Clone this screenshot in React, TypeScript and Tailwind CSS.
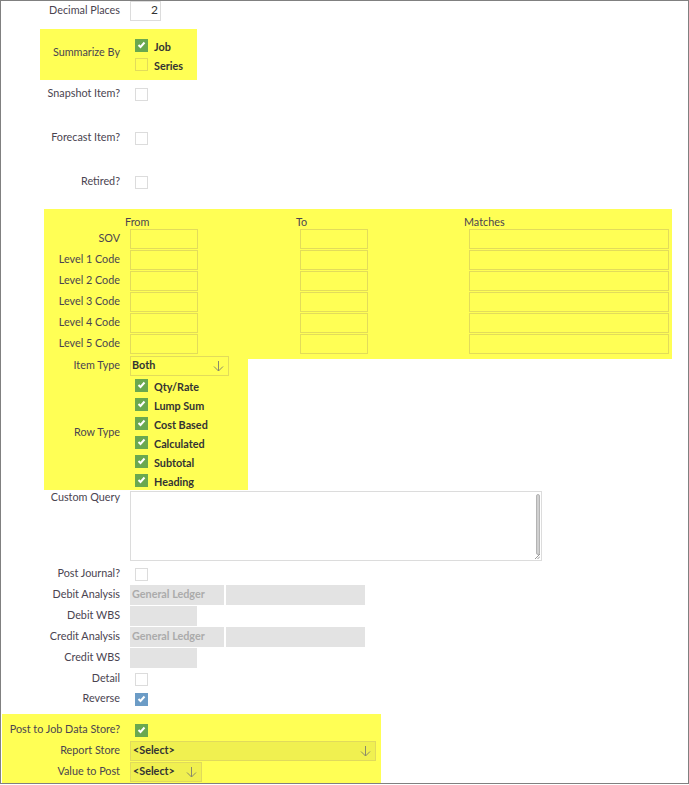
import React from 'react';

type Tone = 'green' | 'blue' | 'white' | 'yellow';

const Check = ({ tone }: { tone: Tone }) => {
  const base = 'w-[13px] h-[13px] shrink-0 flex items-center justify-center';
  const cls =
    tone === 'green'
      ? 'bg-[#6aa84f]'
      : tone === 'blue'
      ? 'bg-[#6c9cc6]'
      : tone === 'yellow'
      ? 'border border-[#e2dc5a]'
      : 'bg-white border border-[#dcdcdc]';
  const on = tone === 'green' || tone === 'blue';
  return (
    <div className={`${base} ${cls}`}>
      {on && (
        <svg width="13" height="13" viewBox="0 0 13 13">
          <polyline points="3.5,6 5.5,8 9.5,3.5" fill="none" stroke="#ffffff" strokeWidth="2" />
        </svg>
      )}
    </div>
  );
};

const Arrow = () => (
  <svg width="11" height="12" viewBox="0 0 11 12" className="shrink-0">
    <path d="M5.5 1 V11 M1 6.5 L5.5 11 L10 6.5" fill="none" stroke="#8a8a6a" strokeWidth="1" />
  </svg>
);

const Row = ({ label, w, children, className = '' }: { label: string; w: string; children?: React.ReactNode; className?: string }) => (
  <div className={`flex items-center h-[20px] ${className}`}>
    <div className={`${w} shrink-0 text-right text-[#4a4450] leading-[13px] pb-[3px]`}>{label}</div>
    <div className="ml-[10px] flex items-center h-full">{children}</div>
  </div>
);

const YInput = ({ w }: { w: string }) => <div className={`${w} h-[20px] border border-[#e2dc5a]`} />;

const Gray = ({ w, text }: { w: string; text?: string }) => (
  <div className={`${w} h-[20px] bg-[#e3e3e3] flex items-center pl-[2px] pb-[2px] font-bold text-[#ababab]`}>{text}</div>
);

const CheckItem = ({ label, tone }: { label: string; tone: Tone }) => (
  <div className="flex items-center h-[19px] pl-[5px]">
    <Check tone={tone} />
    <span className="ml-[6px] font-bold text-[#333333] leading-[13px] pt-[1px]">{label}</span>
  </div>
);

export default function App() {
  const codes = ['SOV', 'Level 1 Code', 'Level 2 Code', 'Level 3 Code', 'Level 4 Code', 'Level 5 Code'];
  const rowTypes = ['Qty/Rate', 'Lump Sum', 'Cost Based', 'Calculated', 'Subtotal', 'Heading'];
  return (
    <div className="w-[689px] h-[784px] border border-[#808080] bg-white overflow-hidden font-['Lato','Liberation_Sans',sans-serif] text-[10.8px]">
      {/* Decimal places */}
      <Row label="Decimal Places" w="w-[119px]">
        <div className="w-[31px] h-[20px] border border-[#dcdcdc] flex items-center justify-end pr-[2px] pb-[2px] text-[12px] text-[#333]">2</div>
      </Row>

      {/* Summarize by */}
      <div className="ml-[39px] mt-[8px] w-[157px] h-[51px] bg-[#ffff55] flex items-center">
        <div className="w-[80px] shrink-0 text-right text-[#4a4450] pb-[5px]">Summarize By</div>
        <div className="ml-[10px] self-start pt-[7px]">
          <CheckItem label="Job" tone="green" />
          <CheckItem label="Series" tone="yellow" />
        </div>
      </div>

      <Row label="Snapshot Item?" w="w-[119px]" className="mt-[4px]">
        <div className="pl-[5px]"><Check tone="white" /></div>
      </Row>
      <Row label="Forecast Item?" w="w-[119px]" className="mt-[24px]">
        <div className="pl-[5px]"><Check tone="white" /></div>
      </Row>
      <Row label="Retired?" w="w-[119px]" className="mt-[24px]">
        <div className="pl-[5px]"><Check tone="white" /></div>
      </Row>

      {/* Code ranges */}
      <div className="ml-[43px] mt-[17px] w-[628px] bg-[#ffff55] pb-[4px]">
        <div className="flex items-end h-[20px] text-[#4a4450] leading-[13px] pb-[1px]">
          <div className="w-[81px] shrink-0" />
          <div className="w-[171px] shrink-0">From</div>
          <div className="w-[168px] shrink-0">To</div>
          <div>Matches</div>
        </div>
        {codes.map((c) => (
          <div key={c} className="flex items-center h-[20px] mb-[1px]">
            <div className="w-[76px] shrink-0 text-right text-[#4a4450] leading-[13px] pb-[3px]">{c}</div>
            <div className="ml-[10px] flex">
              <YInput w="w-[68px]" />
              <div className="ml-[102px]"><YInput w="w-[68px]" /></div>
              <div className="ml-[101px]"><YInput w="w-[200px]" /></div>
            </div>
          </div>
        ))}
      </div>
      <div className="ml-[43px] w-[204px] bg-[#ffff55]">
        <div className="flex items-center h-[20px] -mt-[3px]">
          <div className="w-[76px] shrink-0 text-right text-[#4a4450] leading-[13px] pb-[3px]">Item Type</div>
          <div className="ml-[10px] w-[99px] h-[20px] border border-[#e2dc5a] flex items-center justify-between pl-[1px] pr-[4px]">
            <span className="font-bold text-[#333] pb-[2px]">Both</span>
            <Arrow />
          </div>
        </div>
        <div className="flex items-center">
          <div className="w-[76px] shrink-0 text-right text-[#4a4450] pb-[2px]">Row Type</div>
          <div className="ml-[10px]">
            {rowTypes.map((r) => (
              <CheckItem key={r} label={r} tone="green" />
            ))}
          </div>
        </div>
      </div>

      {/* Custom query */}
      <div className="flex mt-[1px]">
        <div className="w-[119px] shrink-0 text-right text-[#4a4450] leading-[13px] -mt-[1px]">Custom Query</div>
        <div className="ml-[10px] w-[412px] h-[70px] border border-[#dcdcdc] relative">
          <div className="absolute right-[1px] top-[2px] bottom-[5px] w-[4px] rounded-[2px] bg-[#d0d0d0] border border-[#b4b4b4]" />
          <svg width="5" height="5" viewBox="0 0 5 5" className="absolute right-[1px] bottom-[1px]">
            <path d="M0 5 L5 0 M2.5 5 L5 2.5" stroke="#999" strokeWidth="1" />
          </svg>
        </div>
      </div>

      <Row label="Post Journal?" w="w-[119px]" className="mt-[3px]">
        <div className="pl-[5px]"><Check tone="white" /></div>
      </Row>
      <Row label="Debit Analysis" w="w-[119px]" className="mt-[1px]">
        <Gray w="w-[94px]" text="General Ledger" />
        <div className="ml-[2px]"><Gray w="w-[139px]" /></div>
      </Row>
      <Row label="Debit WBS" w="w-[119px]" className="mt-[1px]">
        <Gray w="w-[67px]" />
      </Row>
      <Row label="Credit Analysis" w="w-[119px]" className="mt-[1px]">
        <Gray w="w-[94px]" text="General Ledger" />
        <div className="ml-[2px]"><Gray w="w-[139px]" /></div>
      </Row>
      <Row label="Credit WBS" w="w-[119px]" className="mt-[1px]">
        <Gray w="w-[67px]" />
      </Row>
      <Row label="Detail" w="w-[119px]" className="mt-[1px]">
        <div className="pl-[5px]"><Check tone="white" /></div>
      </Row>
      <Row label="Reverse" w="w-[119px]">
        <div className="pl-[5px]"><Check tone="blue" /></div>
      </Row>

      {/* Job data store */}
      <div className="ml-[1px] mt-[5px] w-[379px] h-[69px] bg-[#ffff55] pt-[6px]">
        <Row label="Post to Job Data Store?" w="w-[118px]">
          <div className="pl-[5px]"><Check tone="green" /></div>
        </Row>
        <Row label="Report Store" w="w-[118px]" className="mt-[1px]">
          <div className="w-[246px] h-[20px] bg-[#f0f050] border border-[#e0da5c] flex items-center justify-between pl-[2px] pr-[4px]">
            <span className="font-bold text-[#333] pb-[2px]">&lt;Select&gt;</span>
            <Arrow />
          </div>
        </Row>
        <Row label="Value to Post" w="w-[118px]" className="mt-[1px]">
          <div className="w-[72px] h-[20px] bg-[#f0f050] border border-[#e0da5c] flex items-center justify-between pl-[2px] pr-[4px]">
            <span className="font-bold text-[#333] pb-[2px]">&lt;Select&gt;</span>
            <Arrow />
          </div>
        </Row>
      </div>
    </div>
  );
}
